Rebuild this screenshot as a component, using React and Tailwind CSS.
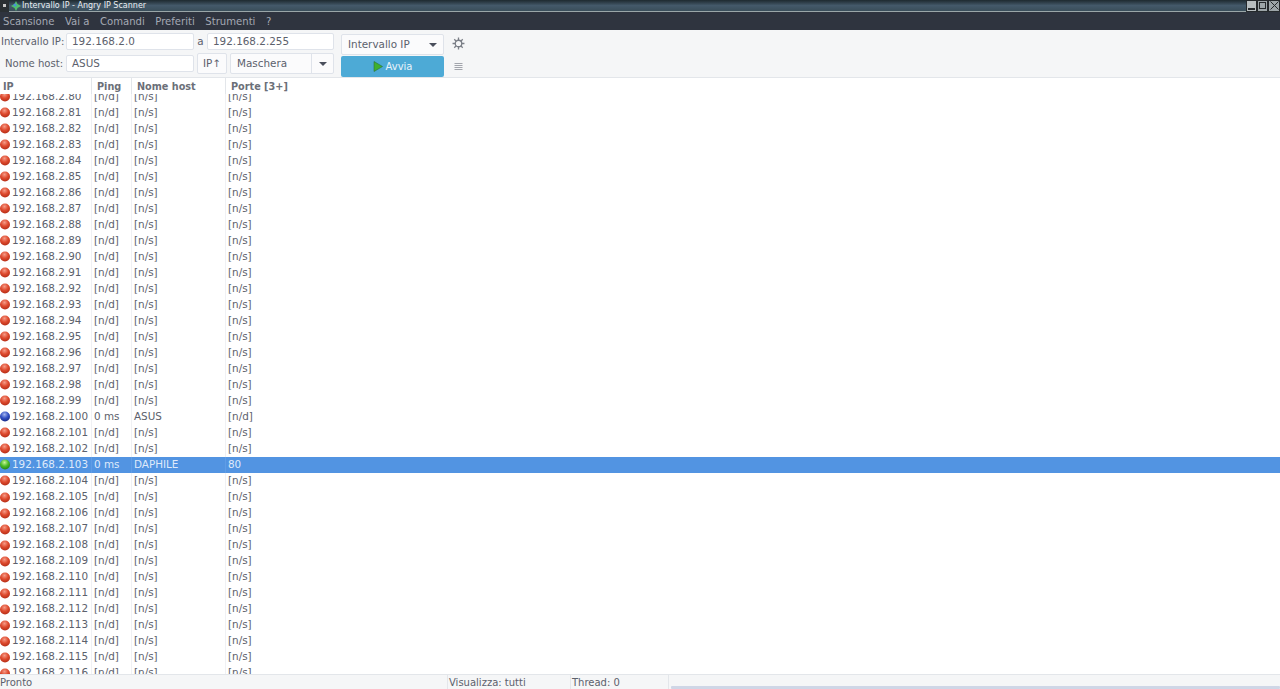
import React from "react";

function Ball({ color }) {
  const id = "ball-" + color;
  const colors = {
    red: ["#f59a86", "#de4a2e", "#b02a14"],
    blue: ["#a4b6ee", "#3350c4", "#16267e"],
    green: ["#c9f59a", "#4cbc28", "#1f7c10"],
  }[color];
  return (
    <svg width="11" height="11" viewBox="0 0 11 11" className="shrink-0">
      <defs>
        <radialGradient id={id} cx="0.45" cy="0.3" r="0.75">
          <stop offset="0" stopColor={colors[0]} />
          <stop offset="0.5" stopColor={colors[1]} />
          <stop offset="1" stopColor={colors[2]} />
        </radialGradient>
      </defs>
      <circle cx="5" cy="5.5" r="5" fill={`url(#${id})`} />
    </svg>
  );
}

function Row({ last, ping = "[n/d]", host = "[n/s]", ports = "[n/s]", color = "red", selected }) {
  const line = selected ? "border-[#5f9de6]" : "border-[#f0f1f4]";
  return (
    <div className={`flex h-[16.03px] items-center ${selected ? "bg-[#5294e2] text-[#dfeafa]" : ""}`}>
      <div className={`flex h-full w-[92px] shrink-0 items-center border-r ${line}`}>
        <Ball color={color} />
        <span className="ml-px">192.168.2.{last}</span>
      </div>
      <div className={`flex h-full w-[40px] shrink-0 items-center border-r pl-[2px] ${line}`}><span>{ping}</span></div>
      <div className={`flex h-full w-[94px] shrink-0 items-center border-r pl-[2px] ${line}`}><span>{host}</span></div>
      <div className="flex h-full items-center pl-[2px]"><span>{ports}</span></div>
    </div>
  );
}

function Arrow() {
  return <span className="block h-0 w-0 border-x-[4px] border-t-[4px] border-x-transparent border-t-[#4a4f5c]" />;
}

function Input({ value, className }) {
  return (
    <div className={`flex h-[17px] items-center rounded-[2px] border border-[#dfe3ea] bg-white pl-[5px] ${className}`}>
      {value}
    </div>
  );
}

const rows = [];
for (let i = 80; i <= 116; i++) rows.push(i);

export default function App() {
  return (
    <div className="flex h-[689px] w-[1280px] flex-col overflow-hidden bg-white font-['DejaVu_Sans',sans-serif] text-[10px] text-[#5c616c]">
      {/* window frame */}
      <div className="flex h-3 shrink-0 items-center border-b border-[#9aa6a8] bg-gradient-to-b from-[#1e2a30] via-[#44596a] to-[#3a4e5a] text-[8px] text-[#e8eef2]">
        <div className="flex h-3 w-[9px] items-center justify-center bg-[#2a2f33]">
          <span className="h-[3px] w-[3px] bg-[#c8c8c8]" />
        </div>
        <svg width="10" height="10" viewBox="0 0 10 10" className="ml-[2px]">
          <path d="M5 0 L6.5 3 L10 5 L6.5 7 L5 10 L3.5 7 L0 5 L3.5 3 Z" fill="#4fc06a" />
          <circle cx="4" cy="4" r="1.6" fill="#4a90d9" />
        </svg>
        <span className="ml-px">Intervallo IP - Angry IP Scanner</span>
        <div className="ml-auto flex h-3">
          <div className="flex h-3 w-[11px] items-end justify-center border border-[#25292c] bg-[#b8bec0] pb-px">
            <span className="h-[2px] w-[7px] bg-[#25292c]" />
          </div>
          <div className="flex h-3 w-[11px] items-center justify-center border border-[#25292c] bg-[#9da5a8]">
            <span className="h-[7px] w-[7px] border border-[#25292c]" />
          </div>
          <div className="flex h-3 w-[12px] items-center justify-center border border-[#25292c] bg-[#9da5a8]">
            <svg width="9" height="9" viewBox="0 0 9 9">
              <path d="M0.5 0.5 L8.5 8.5 M8.5 0.5 L0.5 8.5" stroke="#25292c" strokeWidth="1" />
            </svg>
          </div>
        </div>
      </div>

      {/* menu bar */}
      <div className="flex h-[18px] shrink-0 items-center gap-[10.5px] bg-[#2f343f] pl-[3px] pt-px text-[10.1px] text-[#a4a9b4]">
        <span>Scansione</span>
        <span>Vai a</span>
        <span>Comandi</span>
        <span>Preferiti</span>
        <span>Strumenti</span>
        <span>?</span>
      </div>

      {/* toolbar */}
      <div className="flex h-[48px] shrink-0 border-b border-[#e3e6ea] bg-[#f5f6f7] text-[10.4px]">
        <div className="flex w-[334px] shrink-0 flex-col gap-[3px] pt-[3px]">
          <div className="flex h-[17px] items-center whitespace-nowrap">
            <span className="w-[66px] pl-px text-[10.1px]">Intervallo IP:</span>
            <Input value="192.168.2.0" className="w-[128px]" />
            <span className="w-[13px] text-center">a</span>
            <Input value="192.168.2.255" className="w-[127px]" />
          </div>
          <div className="flex h-[21px] items-center whitespace-nowrap">
            <span className="w-[66px] pl-[5px] text-[10.1px]">Nome host:</span>
            <Input value="ASUS" className="w-[128px]" />
            <div className="ml-[3px] flex h-[21px] w-[30px] items-center justify-center rounded-[2px] border border-[#dfe3ea] bg-[#fbfbfc]">IP↑</div>
            <div className="ml-[3px] flex h-[21px] w-[104px] items-center rounded-[2px] border border-[#dfe3ea] bg-[#fbfbfc]">
              <span className="pl-[6px]">Maschera</span>
              <span className="ml-auto flex h-[19px] w-[22px] items-center justify-center border-l border-[#dfe3ea]"><Arrow /></span>
            </div>
          </div>
        </div>
        <div className="ml-[7px] flex w-[103px] shrink-0 flex-col pt-[4px]">
          <div className="flex h-[21px] items-center rounded-[2px] border border-[#dfe3ea] bg-[#fbfbfc] pl-[6px] pr-[6px]">
            <span>Intervallo IP</span>
            <span className="ml-auto"><Arrow /></span>
          </div>
          <div className="mt-px flex h-[21px] items-center justify-center rounded-[2px] bg-[#4daad6] text-[10px] text-[#e8f4fa]">
            <svg width="10" height="11" viewBox="0 0 10 11" className="mr-[3px]">
              <path d="M1 0.5 L9.5 5.5 L1 10.5 Z" fill="#3fb02e" stroke="#2c6e3e" strokeWidth="0.6" />
            </svg>
            Avvia
          </div>
        </div>
        <div className="ml-[8px] flex flex-col items-center pt-[7px]">
          <svg width="13" height="13" viewBox="0 0 24 24" fill="none" stroke="#7a7e86" strokeWidth="2.4">
            <circle cx="12" cy="12" r="6" />
            <path d="M12 1v5M12 18v5M1 12h5M18 12h5M4.2 4.2l3.5 3.5M16.3 16.3l3.5 3.5M4.2 19.8l3.5-3.5M16.3 7.7l3.5-3.5" />
          </svg>
          <svg width="9" height="8" viewBox="0 0 9 8" className="mt-[13px]">
            <path d="M0.5 .5h8M0.5 2.5h8M0.5 4.5h8M0.5 6.5h8" stroke="#8d9098" strokeWidth="0.8" />
          </svg>
        </div>
      </div>

      {/* table header */}
      <div className="flex h-4 shrink-0 items-center bg-white text-[9.7px] font-bold text-[#6b6f78]">
        <div className="h-4 w-[92px] border-r border-[#e3e6ea] pl-[3px] pt-px leading-4">IP</div>
        <div className="h-4 w-[40px] border-r border-[#e3e6ea] pl-[5px] pt-px leading-4">Ping</div>
        <div className="h-4 w-[94px] border-r border-[#e3e6ea] pl-[5px] pt-px leading-4">Nome host</div>
        <div className="h-4 pl-[5px] pt-px leading-4">Porte [3+]</div>
      </div>

      {/* rows */}
      <div className="min-h-0 flex-1 overflow-hidden">
        <div className="-mt-[5.4px] text-[10.4px]">
          {rows.map((n) => {
            if (n === 100) return <Row key={n} last={n} ping="0 ms" host="ASUS" ports="[n/d]" color="blue" />;
            if (n === 103) return <Row key={n} last={n} ping="0 ms" host="DAPHILE" ports="80" color="green" selected />;
            return <Row key={n} last={n} />;
          })}
        </div>
      </div>

      {/* status bar */}
      <div className="flex h-[15px] shrink-0 items-center border-t border-[#e3e6ea] bg-[#f5f6f7] text-[10px]">
        <div className="h-[14px] w-[448px] shrink-0 border-r border-[#e3e6ea] pt-px leading-[14px]">Pronto</div>
        <div className="h-[14px] w-[123px] shrink-0 border-r border-[#e3e6ea] pl-px pt-px leading-[14px]">Visualizza: tutti</div>
        <div className="h-[14px] w-[98px] shrink-0 border-r border-[#e3e6ea] pl-px pt-px leading-[14px]">Thread: 0</div>
        <div className="ml-[2px] mt-auto h-[3px] flex-1 rounded-[1px] bg-[#cfd6e6]" />
      </div>
    </div>
  );
}
